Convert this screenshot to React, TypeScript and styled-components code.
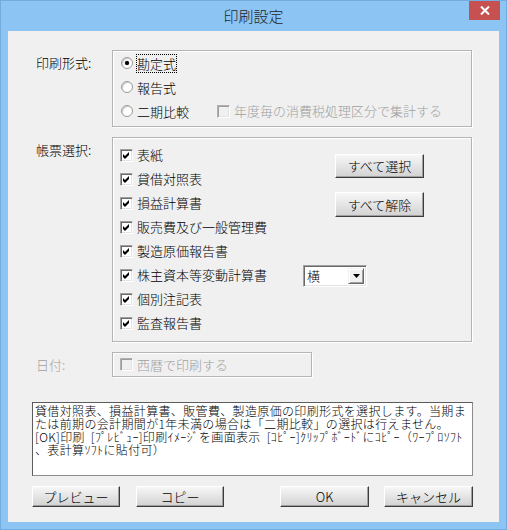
import React from "react";
import styled, { createGlobalStyle } from "styled-components";

const GlobalStyle = createGlobalStyle`
  html, body {
    margin: 0;
    padding: 0;
    background: #ffffff;
  }
  * {
    box-sizing: border-box;
  }
`;

const font = `"Noto Sans CJK JP", "Noto Sans", sans-serif`;

type CheckProps = {
  label: string;
  checked?: boolean;
  disabled?: boolean;
};

const CheckMark = () => (
  <svg width="7" height="7" viewBox="0 0 7 7">
    <polygon points="0,2 2,4 6,0 6,3 2,7 0,5" fill="#000" />
  </svg>
);

const Check: React.FC<CheckProps> = ({ label, checked, disabled }) => (
  <CheckRow>
    <CheckBox $disabled={disabled}>{checked && <CheckMark />}</CheckBox>
    <ItemText $disabled={disabled}>{label}</ItemText>
  </CheckRow>
);

type RadioProps = {
  label: string;
  selected?: boolean;
  children?: React.ReactNode;
};

const Radio: React.FC<RadioProps> = ({ label, selected, children }) => (
  <RadioRow>
    <RadioCircle>{selected && <RadioDot />}</RadioCircle>
    <RadioText $focused={selected}>{label}</RadioText>
    {children}
  </RadioRow>
);

const reports = [
  "表紙",
  "貸借対照表",
  "損益計算書",
  "販売費及び一般管理費",
  "製造原価報告書",
  "株主資本等変動計算書",
  "個別注記表",
  "監査報告書",
];

const helpLines = [
  "貸借対照表、損益計算書、販管費、製造原価の印刷形式を選択します。当期ま",
  "たは前期の会計期間が1年未満の場合は「二期比較」の選択は行えません。",
  "[OK]印刷  [ﾌﾟﾚﾋﾞｭｰ]印刷ｲﾒｰｼﾞを画面表示  [ｺﾋﾟｰ]ｸﾘｯﾌﾟﾎﾞｰﾄﾞにｺﾋﾟｰ（ﾜｰﾌﾟﾛｿﾌﾄ",
  "、表計算ｿﾌﾄに貼付可）",
];

const App: React.FC = () => {
  return (
    <>
      <GlobalStyle />
      <Window>
        <TitleBar>
          <span />
          <Title>印刷設定</Title>
          <CloseButton>
            <svg width="10" height="9" viewBox="0 0 10 9">
              <path d="M1 0.5 L9 8.5 M9 0.5 L1 8.5" stroke="#fff" strokeWidth="2" />
            </svg>
          </CloseButton>
        </TitleBar>
        <Content>
          <Section>
            <FieldLabel>印刷形式:</FieldLabel>
            <GroupBox $width={360} $height={77}>
              <RadioList>
                <Radio label="勘定式" selected />
                <Radio label="報告式" />
                <Radio label="二期比較">
                  <SideCheck>
                    <Check label="年度毎の消費税処理区分で集計する" disabled />
                  </SideCheck>
                </Radio>
              </RadioList>
            </GroupBox>
          </Section>

          <Section>
            <FieldLabel>帳票選択:</FieldLabel>
            <GroupBox $width={360} $height={205}>
              <ReportGrid>
                {reports.map((r, i) => (
                  <ReportCell key={r} $row={i + 1}>
                    <Check label={r} checked />
                  </ReportCell>
                ))}
                <SelectAll>
                  <Button $width={89} $height={24}>すべて選択</Button>
                </SelectAll>
                <ClearAll>
                  <Button $width={89} $height={25}>すべて解除</Button>
                </ClearAll>
                <OrientCell>
                  <Combo>
                    <ComboText>横</ComboText>
                    <ComboArrow>
                      <svg width="7" height="4" viewBox="0 0 7 4">
                        <polygon points="0,0 7,0 3.5,4" fill="#000" />
                      </svg>
                    </ComboArrow>
                  </Combo>
                </OrientCell>
              </ReportGrid>
            </GroupBox>
          </Section>

          <Section>
            <FieldLabel $disabled>日付:</FieldLabel>
            <GroupBox $width={200} $height={25}>
              <DateRow>
                <Check label="西暦で印刷する" disabled />
              </DateRow>
            </GroupBox>
          </Section>

          <HelpBox>
            {helpLines.map((l, i) => (
              <HelpLine key={i}>{l}</HelpLine>
            ))}
          </HelpBox>

          <ButtonBar>
            <ButtonGroup $gap={16}>
              <Button $width={88} $height={21}>プレビュー</Button>
              <Button $width={88} $height={21}>コピー</Button>
            </ButtonGroup>
            <ButtonGroup $gap={15}>
              <Button $width={89} $height={21}>OK</Button>
              <Button $width={89} $height={21}>キャンセル</Button>
            </ButtonGroup>
          </ButtonBar>
        </Content>
      </Window>
    </>
  );
};

const Window = styled.div`
  width: 507px;
  height: 530px;
  display: flex;
  flex-direction: column;
  background: #8cc4f4;
  border: 1px solid #74acdf;
  font-family: ${font};
  font-weight: 300;
  color: #000;
`;

const TitleBar = styled.div`
  height: 30px;
  display: grid;
  grid-template-columns: 1fr auto 1fr;
  align-items: start;
`;

const Title = styled.div`
  font-size: 15px;
  line-height: 30px;
  color: #1e1e1e;
`;

const CloseButton = styled.div`
  justify-self: end;
  width: 31px;
  height: 19px;
  margin-right: 6px;
  background: #c75050;
  display: flex;
  align-items: center;
  justify-content: center;
`;

const Content = styled.div`
  flex: 1;
  margin: 0 7px 7px 7px;
  background: #f0f0f0;
  padding: 19px 26px 15px 24px;
  display: flex;
  flex-direction: column;
  gap: 10px;
`;

const Section = styled.div`
  display: grid;
  grid-template-columns: 80px auto;
  align-items: start;
`;

const FieldLabel = styled.div<{ $disabled?: boolean }>`
  padding-left: 4px;
  margin-top: 1px;
  font-size: 13px;
  line-height: 24px;
  color: ${(p) => (p.$disabled ? "#a0a0a0" : "#000")};
`;

const GroupBox = styled.div<{ $width: number; $height: number }>`
  width: ${(p) => p.$width}px;
  height: ${(p) => p.$height}px;
  border: 1px solid #b4b4b4;
  box-shadow: inset 1px 1px 0 #ffffff, 1px 1px 0 #ffffff;
`;

const RadioList = styled.div`
  display: flex;
  flex-direction: column;
  padding-left: 8px;
`;

const RadioRow = styled.div`
  height: 24px;
  display: flex;
  align-items: center;
`;

const RadioCircle = styled.span`
  width: 12px;
  height: 12px;
  border-radius: 50%;
  background: #ffffff;
  border: 1px solid #9a9a9a;
  box-shadow: inset 1px 1px 1px #c8c8c8;
  display: flex;
  align-items: center;
  justify-content: center;
`;

const RadioDot = styled.span`
  width: 4px;
  height: 4px;
  border-radius: 50%;
  background: #000;
  box-shadow: 0 0 1px #333;
`;

const RadioText = styled.span<{ $focused?: boolean }>`
  margin-left: 3px;
  font-size: 13px;
  line-height: 17px;
  border: 1px dotted ${(p) => (p.$focused ? "#000" : "transparent")};
`;

const SideCheck = styled.div`
  margin-left: 27px;
`;

const CheckRow = styled.div`
  display: flex;
  align-items: center;
`;

const CheckBox = styled.span<{ $disabled?: boolean }>`
  width: 13px;
  height: 13px;
  flex: none;
  display: flex;
  align-items: center;
  justify-content: center;
  background: ${(p) => (p.$disabled ? "#f0f0f0" : "#ffffff")};
  border-style: solid;
  border-width: 1px;
  border-color: ${(p) =>
    p.$disabled ? "#b0b0b0 #ffffff #ffffff #b0b0b0" : "#a0a0a0 #ffffff #ffffff #a0a0a0"};
  box-shadow: ${(p) =>
    p.$disabled
      ? "inset 1px 1px 0 #9c9c9c, inset -1px -1px 0 #e3e3e3"
      : "inset 1px 1px 0 #696969, inset -1px -1px 0 #e3e3e3"};
`;

const ItemText = styled.span<{ $disabled?: boolean }>`
  margin-left: 4px;
  font-size: 13px;
  line-height: 18px;
  white-space: nowrap;
  color: ${(p) => (p.$disabled ? "#a0a0a0" : "#000")};
`;

const ReportGrid = styled.div`
  display: grid;
  grid-template-columns: 183px 1fr;
  grid-template-rows: repeat(8, 24px);
  padding: 5px 0 0 7px;
`;

const ReportCell = styled.div<{ $row: number }>`
  grid-column: 1;
  grid-row: ${(p) => p.$row};
  display: flex;
  align-items: center;
`;

const SelectAll = styled.div`
  grid-column: 2;
  grid-row: 1 / span 2;
  padding: 9px 0 0 32px;
`;

const ClearAll = styled.div`
  grid-column: 2;
  grid-row: 3;
  padding-left: 32px;
`;

const OrientCell = styled.div`
  grid-column: 2;
  grid-row: 6;
  display: flex;
  align-items: center;
  padding-top: 2px;
`;

const Combo = styled.div`
  width: 64px;
  height: 22px;
  display: flex;
  align-items: center;
  justify-content: space-between;
  background: #ffffff;
  border-style: solid;
  border-width: 1px;
  border-color: #a0a0a0 #ffffff #ffffff #a0a0a0;
  box-shadow: inset 1px 1px 0 #696969, inset -1px -1px 0 #e3e3e3;
  padding: 2px;
`;

const ComboText = styled.span`
  font-size: 13px;
  line-height: 16px;
  padding-left: 1px;
`;

const ComboArrow = styled.span`
  width: 16px;
  height: 16px;
  display: flex;
  align-items: center;
  justify-content: center;
  background: #f0f0f0;
  border-style: solid;
  border-width: 1px;
  border-color: #f0f0f0 #696969 #696969 #f0f0f0;
  box-shadow: inset 1px 1px 0 #ffffff, inset -1px -1px 0 #a0a0a0;
`;

const Button = styled.button<{ $width: number; $height: number }>`
  width: ${(p) => p.$width}px;
  height: ${(p) => p.$height}px;
  padding: 0;
  font-family: ${font};
  font-size: 13px;
  font-weight: 300;
  line-height: 1;
  color: #000;
  background: linear-gradient(#f7f7f7, #d2d2d2);
  border-style: solid;
  border-width: 1px;
  border-color: #ffffff #3c3c3c #3c3c3c #ffffff;
  box-shadow: inset -1px -1px 0 #a0a0a0;
`;

const DateRow = styled.div`
  height: 23px;
  display: flex;
  align-items: center;
  padding-left: 7px;
`;

const HelpBox = styled.div`
  margin-top: 15px;
  width: 441px;
  height: 74px;
  background: #ffffff;
  border: 1px solid #828282;
  border-color: #5c5c5c #8c8c8c #8c8c8c #5c5c5c;
  padding: 1px 2px 0 2px;
  overflow: hidden;
`;

const HelpLine = styled.div`
  font-size: 12px;
  line-height: 13px;
  letter-spacing: 0.35px;
  white-space: pre;
`;

const ButtonBar = styled.div`
  width: 441px;
  display: flex;
  justify-content: space-between;
`;

const ButtonGroup = styled.div<{ $gap: number }>`
  display: flex;
  gap: ${(p) => p.$gap}px;
`;

export default App;
